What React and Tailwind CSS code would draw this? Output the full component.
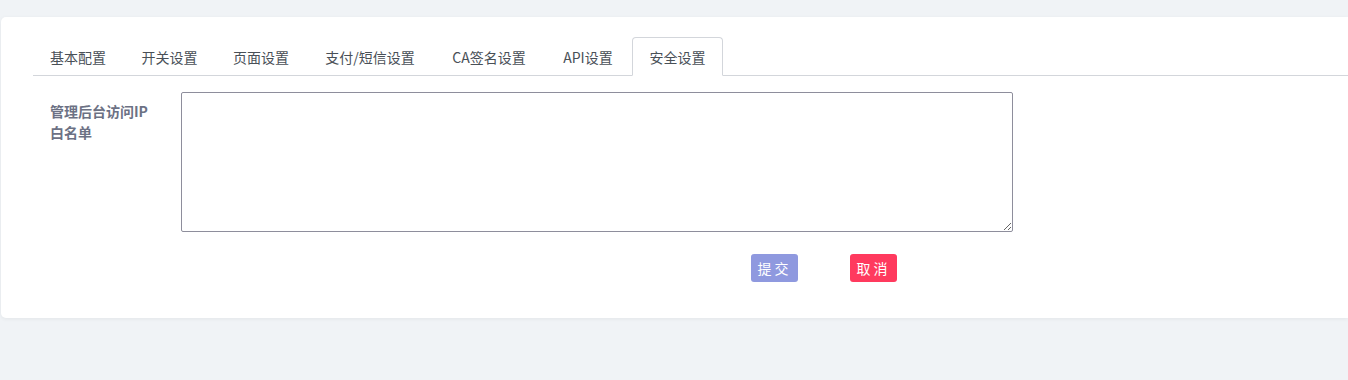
// Settings page: tabbed card with the security tab open.
const TABS = [
  { label: "基本配置", w: "w-[90px]" },
  { label: "开关设置", w: "w-[89px]" },
  { label: "页面设置", w: "w-[90px]" },
  { label: "支付/短信设置", w: "w-[124px]" },
  { label: "CA签名设置", w: "w-[110px]" },
  { label: "API设置", w: "w-[84px]" },
  { label: "安全设置", w: "w-[91px]" },
];
const ACTIVE = "安全设置";

export default function App() {
  return (
    <div
      className="h-[380px] w-full overflow-hidden bg-[#f0f3f6] pt-[17px] pl-px"
      style={{ fontFamily: '"Microsoft YaHei", "Noto Sans CJK SC", "Noto Sans", sans-serif' }}
    >
      <div className="h-[301px] rounded-l-[5px] bg-white pt-5 pl-8 shadow-[0_1px_4px_rgba(0,0,0,0.06)]">
        {/* Tabs */}
        <ul className="flex border-b border-[#d3d6db]">
          {TABS.map((t) => (
            <li
              key={t.label}
              className={`-mb-px mr-[2px] flex h-[39px] items-center justify-center rounded-t-[4px] border text-sm ${t.w} ${
                t.label === ACTIVE ? "border-[#d3d6db] border-b-white bg-white text-[#495057]" : "border-transparent text-[#495057]"
              }`}
            >
              {t.label}
            </li>
          ))}
        </ul>

        {/* IP whitelist */}
        <div className="mt-4 flex">
          <label className="w-[148px] shrink-0 pl-[17px] pt-[9px] pr-6 text-sm font-bold leading-[21px] text-[#6c7184]">
            管理后台访问IP白名单
          </label>
          <textarea className="h-[140px] w-[832px] rounded-[2px] border border-[#8e8e9c] bg-white outline-none" />
        </div>

        <div className="mt-[22px] flex pl-[718px]">
          <button className="h-7 w-[47px] rounded-[3px] bg-[#8f99df] text-sm tracking-[3px] text-white">提交</button>
          <button className="ml-[52px] h-7 w-[47px] rounded-[3px] bg-[#ff3a5e] text-sm tracking-[3px] text-white">
            取消
          </button>
        </div>
      </div>
    </div>
  );
}
